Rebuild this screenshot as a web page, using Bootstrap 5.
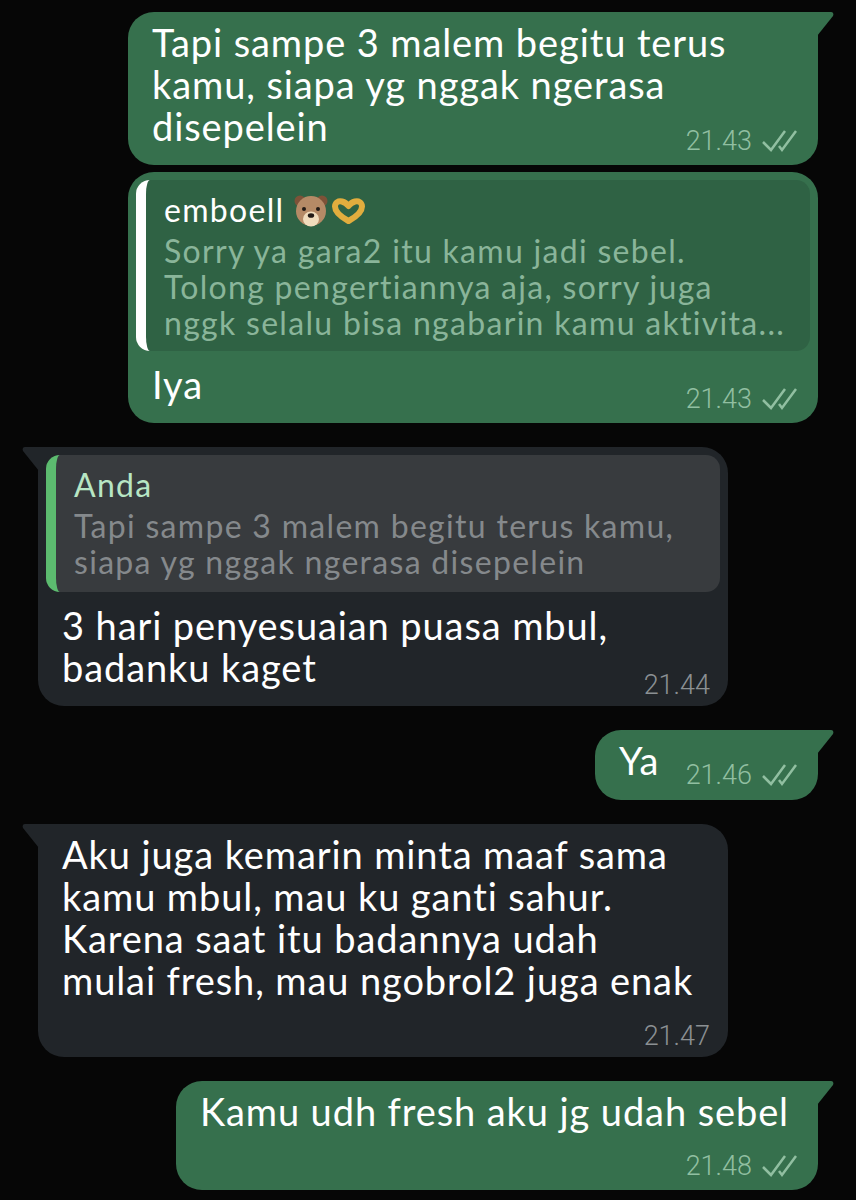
<!DOCTYPE html>
<html lang="en">
<head>
  <meta charset="UTF-8">
  <meta name="viewport" content="width=device-width, initial-scale=1.0">
  <title>Chat</title>
  <link href="https://cdn.jsdelivr.net/npm/bootstrap@5.3.0/dist/css/bootstrap.min.css" rel="stylesheet">
  <style>
    body {
      background-color: #060606;
      font-family: "Lato", "Liberation Sans", sans-serif;
      font-variant-ligatures: none;
    }
    .chat-wrap {
      width: 856px;
      height: 1200px;
      overflow: hidden;
      padding: 12px 38px 0;
    }
    .bubble {
      position: relative;
      width: 690px;
      border-radius: 0 0 26px 26px;
      color: #fff;
      font-size: 38px;
      letter-spacing: 0.9px;
      line-height: 42px;
      padding: 9px 20px 9px 24px;
      margin-bottom: 24px;
      white-space: nowrap;
    }
    .bubble-out {
      background-color: #36704d;
      margin-left: 90px;
      border-top-left-radius: 26px;
    }
    .bubble-in {
      background-color: #212529;
      border-top-right-radius: 26px;
      padding-right: 18px;
      padding-bottom: 6px;
    }
    .bubble-tight { margin-bottom: 7px; }
    .bubble-plain { border-top-right-radius: 26px; }
    .bubble-ya { width: 223px; margin-left: 557px; padding-bottom: 10px; }
    .bubble-last { width: 642px; margin-left: 138px; }
    .tail {
      position: absolute;
      top: 0;
      width: 17px;
      height: 24px;
    }
    .bubble-out .tail { right: -16px; fill: #36704d; }
    .bubble-in .tail { left: -16px; fill: #212529; }
    .stamp {
      font-family: "Roboto", "Liberation Sans", sans-serif;
      font-weight: 300;
      font-size: 27px;
      letter-spacing: 0;
      line-height: 30px;
      color: #91bfa1;
    }
    .bubble-in .stamp { color: #8b9093; }
    .stamp-over { margin-top: -21px; }
    .bubble-in .stamp-over { margin-top: -18px; }
    .bubble-in .stamp-below { margin-top: 20px; }
    .stamp-below-out { margin-top: 19px; }
    .stamp-side { margin-top: 21px; }
    .ticks { width: 36px; height: 24px; stroke: #91bfa1; fill: none; stroke-width: 2.5; margin-left: 10px; }
    .reply {
      border-radius: 14px;
      overflow: hidden;
      border-left: 10px solid #fff;
      font-size: 32px;
      letter-spacing: 1.3px;
      line-height: 36px;
      padding: 12px 10px 10px 18px;
      margin: -1px -12px 12px -16px;
    }
    .bubble-out .reply { background-color: #2f6244; }
    .bubble-in .reply {
      background-color: #383b3e;
      border-left-color: #5cbb6f;
      padding-bottom: 12px;
      margin-right: -10px;
    }
    .reply-who { color: #fff; margin-bottom: 5px; }
    .bubble-in .reply-who { color: #b8e6c4; }
    .reply-text { color: #8ab59a; }
    .bubble-in .reply-text { color: #85898c; }
    .emoji-bear { width: 34px; height: 34px; vertical-align: -6px; }
    .emoji-heart { width: 33px; height: 26px; vertical-align: -2px; margin-left: 4px; }
  </style>
</head>
<body>
  <div class="chat-wrap">

    <div class="bubble bubble-out bubble-tight">
      <svg class="tail" viewBox="0 0 17 24"><path d="M0 0H14C16 0 17 2 16 4L0 24Z"/></svg>
      <div>Tapi sampe 3 malem begitu terus<br>kamu, siapa yg nggak ngerasa<br>disepelein</div>
      <div class="d-flex justify-content-end align-items-center stamp stamp-over">
        <span>21.43</span>
        <svg class="ticks" viewBox="0 0 36 24"><path d="M1 13L9 21L23 2M17 17L20 21L34 2"/></svg>
      </div>
    </div>

    <div class="bubble bubble-out bubble-plain">
      <div class="reply">
        <div class="reply-who">emboell
          <svg class="emoji-bear" viewBox="0 0 34 34">
            <circle cx="6" cy="7" r="5.500" fill="#7d5238"/><circle cx="28" cy="7" r="5.500" fill="#7d5238"/>
            <ellipse cx="17" cy="17" rx="15" ry="15" fill="#b58a66"/>
            <ellipse cx="17" cy="25" rx="8" ry="7.500" fill="#f0dcbc"/>
            <circle cx="10" cy="15" r="2" fill="#221a16"/><circle cx="24" cy="15" r="2" fill="#221a16"/>
            <ellipse cx="17" cy="21.500" rx="3.200" ry="2.300" fill="#221a16"/>
          </svg><svg class="emoji-heart" viewBox="0 0 33 26">
            <path d="M16.500 23C11 20 3 15 3 8.500C3 4.500 6.500 2.500 10 3.500C13 4.300 15 6 16.500 8C18 6 20 4.300 23 3.500C26.500 2.500 30 4.500 30 8.500C30 15 22 20 16.500 23Z" fill="none" stroke="#e2ad3e" stroke-width="6" stroke-linejoin="round"/>
          </svg></div>
        <div class="reply-text">Sorry ya gara2 itu kamu jadi sebel.<br>Tolong pengertiannya aja, sorry juga<br>nggk selalu bisa ngabarin kamu aktivita...</div>
      </div>
      <div>Iya</div>
      <div class="d-flex justify-content-end align-items-center stamp stamp-over">
        <span>21.43</span>
        <svg class="ticks" viewBox="0 0 36 24"><path d="M1 13L9 21L23 2M17 17L20 21L34 2"/></svg>
      </div>
    </div>

    <div class="bubble bubble-in">
      <svg class="tail" viewBox="0 0 17 24"><path d="M17 0H3C1 0 0 2 1 4L17 24Z"/></svg>
      <div class="reply">
        <div class="reply-who">Anda</div>
        <div class="reply-text">Tapi sampe 3 malem begitu terus kamu,<br>siapa yg nggak ngerasa disepelein</div>
      </div>
      <div>3 hari penyesuaian puasa mbul,<br>badanku kaget</div>
      <div class="text-end stamp stamp-over">21.44</div>
    </div>

    <div class="bubble bubble-out bubble-ya">
      <svg class="tail" viewBox="0 0 17 24"><path d="M0 0H14C16 0 17 2 16 4L0 24Z"/></svg>
      <div class="d-flex justify-content-between align-items-start">
        <span>Ya</span>
        <div class="d-flex align-items-center stamp stamp-side">
          <span>21.46</span>
          <svg class="ticks" viewBox="0 0 36 24"><path d="M1 13L9 21L23 2M17 17L20 21L34 2"/></svg>
        </div>
      </div>
    </div>

    <div class="bubble bubble-in">
      <svg class="tail" viewBox="0 0 17 24"><path d="M17 0H3C1 0 0 2 1 4L17 24Z"/></svg>
      <div>Aku juga kemarin minta maaf sama<br>kamu mbul, mau ku ganti sahur.<br>Karena saat itu badannya udah<br>mulai fresh, mau ngobrol2 juga enak</div>
      <div class="text-end stamp stamp-below">21.47</div>
    </div>

    <div class="bubble bubble-out bubble-last">
      <svg class="tail" viewBox="0 0 17 24"><path d="M0 0H14C16 0 17 2 16 4L0 24Z"/></svg>
      <div>Kamu udh fresh aku jg udah sebel</div>
      <div class="d-flex justify-content-end align-items-center stamp stamp-below-out">
        <span>21.48</span>
        <svg class="ticks" viewBox="0 0 36 24"><path d="M1 13L9 21L23 2M17 17L20 21L34 2"/></svg>
      </div>
    </div>

  </div>
  <script src="https://cdn.jsdelivr.net/npm/bootstrap@5.3.0/dist/js/bootstrap.bundle.min.js"></script>
</body>
</html>
